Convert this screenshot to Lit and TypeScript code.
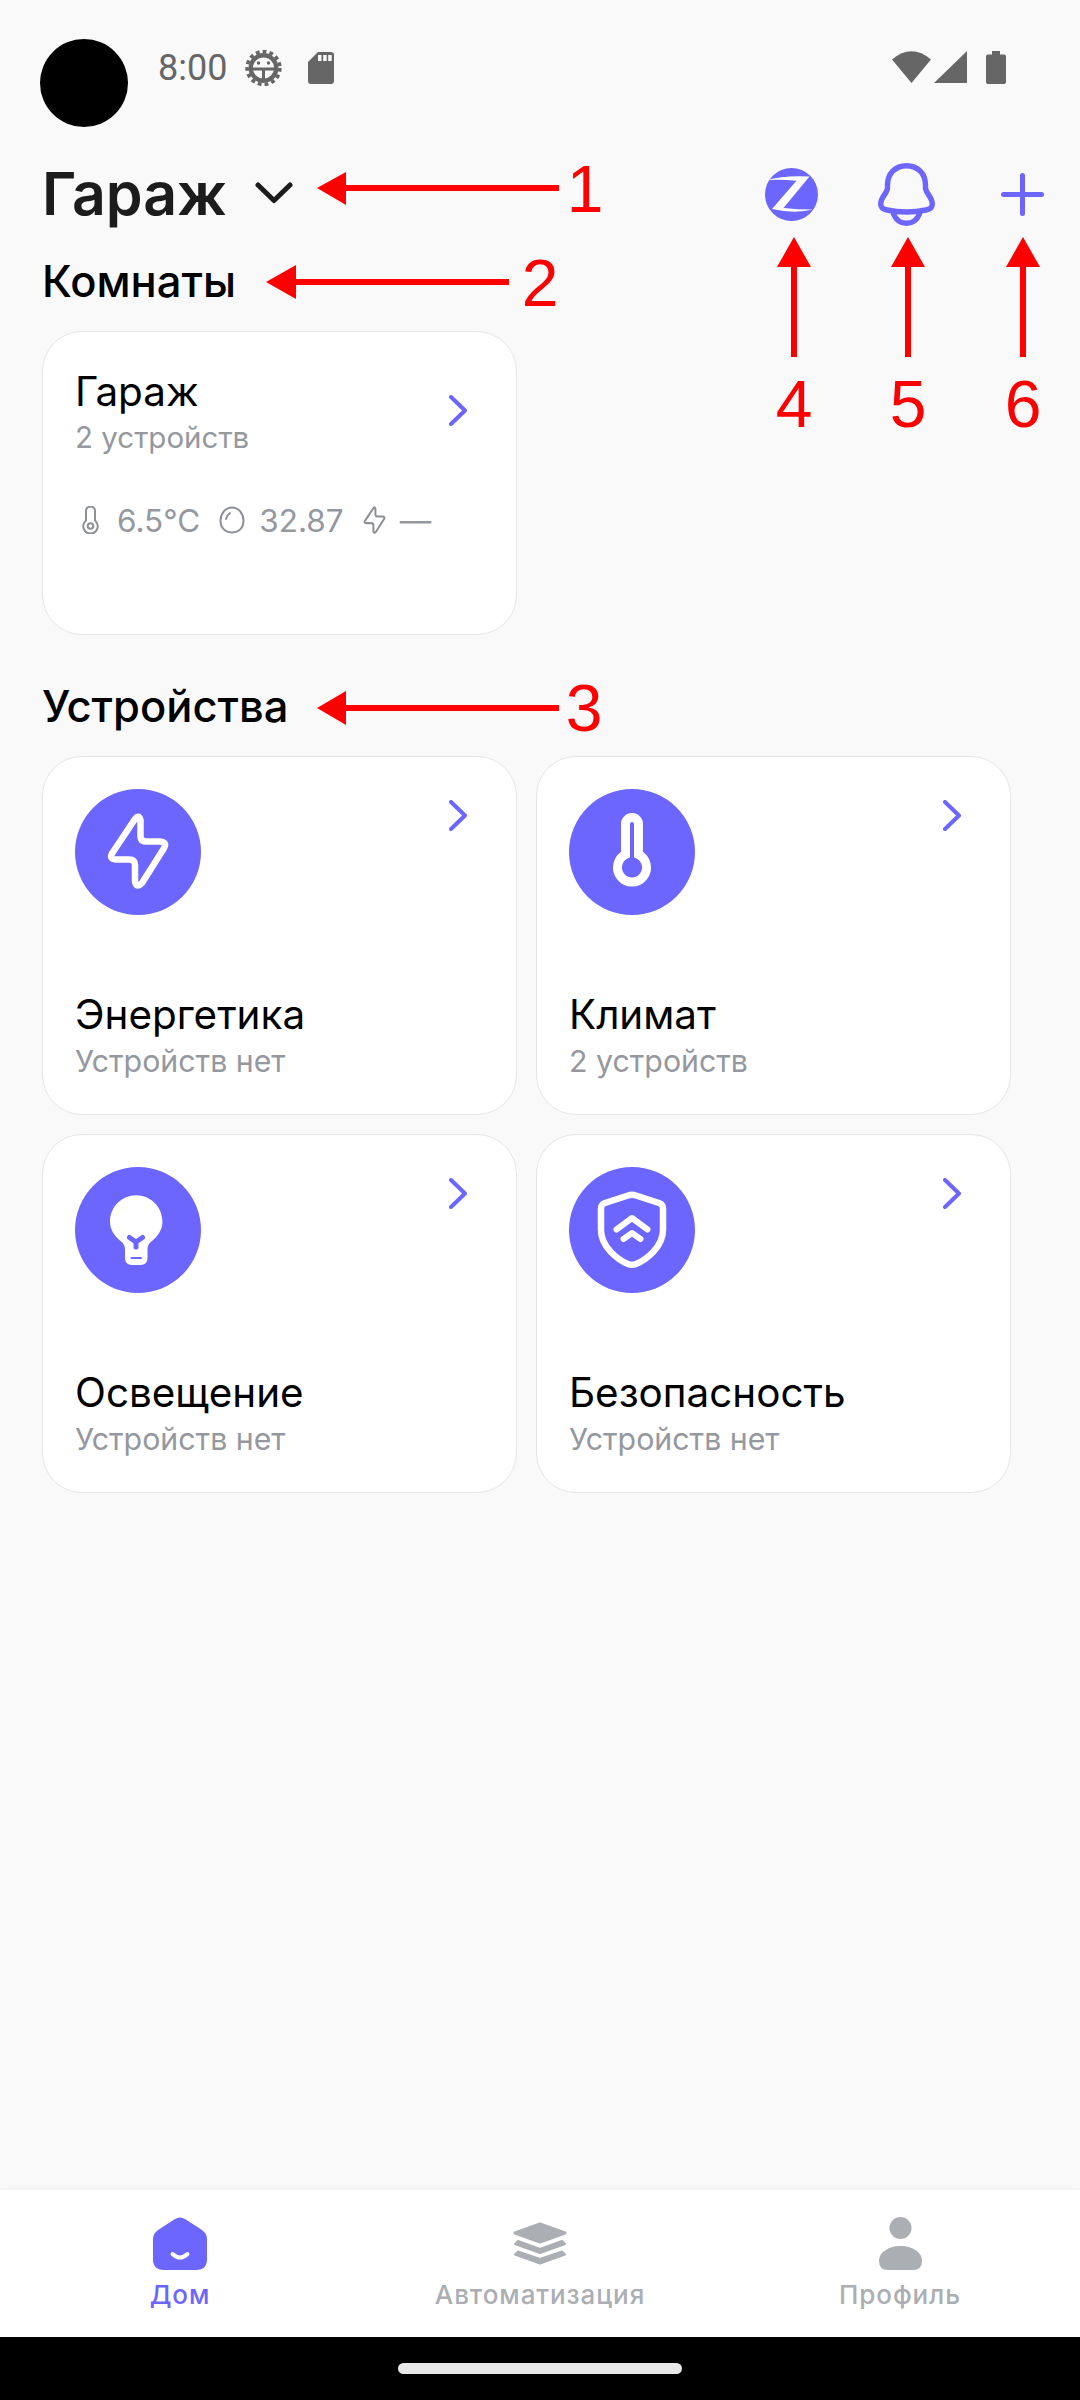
import { LitElement, html, css } from "lit";
import { customElement } from "lit/decorators.js";

const BOLT =
  "M60 30 Q64 25 65.5 31 L65.5 47 Q65.5 52.5 71 52.5 L85 52.5 Q93 53 88.5 60 L67 94 Q61 100 60 92 L60 76 Q60 70.5 54 70.5 L41 70.5 Q33 70 38 63 Z";

const chevron = html`<svg class="chevron" width="18" height="31" viewBox="0 0 18 31">
  <path d="M2 2 L16 15.5 L2 29" fill="none" stroke="#6c66ff" stroke-width="4" stroke-linecap="round" stroke-linejoin="round" />
</svg>`;

const icons: Record<string, unknown> = {
  energy: html`<svg width="126" height="126" viewBox="0 0 126 126">
    <circle cx="63" cy="63" r="63" fill="#6c66ff" />
    <path d=${BOLT} fill="none" stroke="#fff" stroke-width="6.5" stroke-linejoin="round" />
  </svg>`,
  climate: html`<svg width="126" height="126" viewBox="0 0 126 126">
    <circle cx="63" cy="63" r="63" fill="#6c66ff" />
    <path d="M56.5 65.5 V35 a6.5 6.5 0 0 1 13 0 V65.5 A14.5 14.5 0 1 1 56.5 65.5 Z" fill="none" stroke="#fff" stroke-width="9" />
  </svg>`,
  light: html`<svg width="126" height="126" viewBox="0 0 126 126">
    <circle cx="63" cy="63" r="63" fill="#6c66ff" />
    <path d="M61.2 28.3 C75.7 28.3 87.4 40 87.4 54.5 C87.4 63 83 69 77 74 C73.5 77 72.5 79 72.5 83 V91 Q72.5 98 65.5 98 H57 Q50 98 50 91 V83 C50 79 49 77 45.5 74 C39.5 69 35 63 35 54.5 C35 40 46.7 28.3 61.2 28.3 Z" fill="#fff" />
    <path d="M54.5 70.5 L61 75 L67.5 70.5 M61 75 V80" fill="none" stroke="#6c66ff" stroke-width="5" stroke-linecap="round" stroke-linejoin="round" />
    <path d="M56.5 91 H66" fill="none" stroke="#6c66ff" stroke-width="2" stroke-linecap="round" />
  </svg>`,
  security: html`<svg width="126" height="126" viewBox="0 0 126 126">
    <circle cx="63" cy="63" r="63" fill="#6c66ff" />
    <path d="M59 28.5 Q63 27 67 28.5 L90 36 Q94 37.5 94 41 V63 C94 80 77 93 67 97 Q63 98.5 59 97 C49 93 32 80 32 63 V41 Q32 37.5 36 36 Z" fill="none" stroke="#fff" stroke-width="6.5" stroke-linejoin="round" />
    <path d="M47.5 62.5 L63 51 L78.5 62.5 M54.5 72 L63 66 L71.5 72" fill="none" stroke="#fff" stroke-width="6" stroke-linecap="round" stroke-linejoin="round" />
  </svg>`,
};

const devices = [
  { icon: "energy", title: "Энергетика", sub: "Устройств нет" },
  { icon: "climate", title: "Климат", sub: "2 устройств" },
  { icon: "light", title: "Освещение", sub: "Устройств нет" },
  { icon: "security", title: "Безопасность", sub: "Устройств нет" },
];

@customElement("app-root")
export class AppRoot extends LitElement {
  static styles = css`
    :host {
      display: flex;
      flex-direction: column;
      position: relative;
      width: 1080px;
      height: 2400px;
      overflow: hidden;
      background: #f9f9f9;
      font-family: Inter, "Noto Sans", sans-serif;
      color: #000;
    }

    svg {
      display: block;
      flex: none;
    }

    /* Status bar */
    .status {
      display: flex;
      justify-content: space-between;
      padding: 39px 74px 0 40px;
    }
    .camera {
      width: 88px;
      height: 88px;
      border-radius: 50%;
      background: #000;
    }
    .status-left {
      display: flex;
      align-items: center;
      flex: 1;
      height: 36px;
      margin: 11px 0 0 30px;
      font: 36px Roboto, sans-serif;
      color: #666;
    }
    .time {
      margin-right: 18px;
    }
    .gear {
      margin-right: 26px;
    }
    .status-right {
      display: flex;
      align-items: flex-start;
      margin-top: 12px;
    }

    /* Header */
    .main {
      flex: 1;
      padding: 32px 0 0 42px;
    }
    .header {
      display: flex;
      align-items: center;
      height: 70px;
      padding-right: 36px;
    }
    .home-title {
      font-size: 59px;
      line-height: 70px;
      font-weight: 600;
      color: #1c1c1c;
    }
    .caret {
      margin: -2px 0 0 28px;
    }
    .actions {
      display: flex;
      align-items: center;
      margin-left: auto;
    }

    /* Sections */
    .section-title {
      margin: 28px 0 26px;
      font-size: 43.5px;
      line-height: 48px;
      font-weight: 500;
    }
    .section-title.devices {
      margin: 47px 0 26px;
    }
    .grid {
      display: grid;
      grid-template-columns: 475px 475px;
      gap: 19px;
    }
    .card {
      box-sizing: border-box;
      width: 475px;
      background: #fff;
      border: 1px solid #e6e6e8;
      border-radius: 40px;
    }
    .room {
      height: 304px;
      padding: 37px 49px 0 32px;
    }
    .room-head {
      display: flex;
      justify-content: space-between;
    }
    .room-head .chevron {
      margin-top: 26px;
    }
    .room-head .sub {
      margin-top: 4px;
      font-size: 29.5px;
    }
    .device {
      display: flex;
      flex-direction: column;
      justify-content: space-between;
      height: 359px;
      padding: 32px 49px 35px 32px;
    }
    .device-head {
      display: flex;
      justify-content: space-between;
    }
    .device-head .chevron {
      margin-top: 11px;
    }
    .name {
      font-size: 40.4px;
      line-height: 46px;
    }
    .sub {
      margin-top: 5px;
      font-size: 30.3px;
      line-height: 36px;
      color: #95989e;
    }
    .stats {
      display: flex;
      align-items: center;
      height: 36px;
      margin-top: 47px;
      font-size: 31.5px;
      color: #95989e;
    }
    .stat-temp {
      margin: 0 18px 0 7px;
    }
    .stat-icon {
      margin: 0 14px 0 19px;
    }

    /* Bottom nav */
    .nav {
      display: grid;
      grid-template-columns: repeat(3, 1fr);
      height: 147px;
      padding-top: 27px;
      box-sizing: border-box;
      background: #fff;
      box-shadow: 0 -1px 5px rgba(0, 0, 0, 0.04);
    }
    .tab {
      display: flex;
      flex-direction: column;
      align-items: center;
      font-size: 26px;
      line-height: 30px;
      font-weight: 500;
      letter-spacing: 0.9px;
      color: #abaeb2;
    }
    .tab.active {
      color: #6c66ff;
    }
    .tab-icon {
      display: flex;
      align-items: center;
      height: 53px;
      margin-bottom: 10px;
    }
    .gesture {
      display: flex;
      justify-content: center;
      height: 63px;
      padding-top: 26px;
      box-sizing: border-box;
      background: #000;
    }
    .gesture div {
      width: 284px;
      height: 11px;
      border-radius: 6px;
      background: #e8e8e8;
    }

    /* Red annotations drawn on top of the screenshot */
    .notes {
      position: absolute;
      left: 0;
      top: 0;
      pointer-events: none;
    }
    .notes text {
      font: 66px "Liberation Sans", Arial, sans-serif;
      fill: #ff0000;
      text-anchor: middle;
    }
  `;

  renderStatus() {
    return html`<div class="status">
      <div class="camera"></div>
      <div class="status-left">
        <span class="time">8:00</span>
        <svg class="gear" width="37" height="36" viewBox="0 0 37 36" fill="none" stroke="#666">
          <circle cx="18.5" cy="18" r="16.4" stroke-width="3.6" stroke-dasharray="3.8 3.1" />
          <circle cx="18.5" cy="18" r="12.8" stroke-width="4.4" />
          <path d="M5.5 19 H31.5 M18.5 19 V31" stroke-width="3" />
          <circle cx="13.5" cy="13" r="1.7" fill="#666" stroke="none" />
          <circle cx="23.5" cy="13" r="1.7" fill="#666" stroke="none" />
        </svg>
        <svg width="26" height="32" viewBox="0 0 26 32">
          <path d="M10 0 H23 a3 3 0 0 1 3 3 V29 a3 3 0 0 1 -3 3 H3 a3 3 0 0 1 -3 -3 V10 Z" fill="#666" />
          <path d="M10 3 h3.5 v6 h-3.5 Z M15.2 3 h3.5 v6 h-3.5 Z M20.2 3 h3.5 v6 h-3.5 Z" fill="#f9f9f9" />
        </svg>
      </div>
      <div class="status-right">
        <svg width="114" height="33" viewBox="0 0 114 33" fill="#666">
          <path d="M0 8.5 Q19.5 -8 39 8.5 L19.5 32 Z" />
          <path d="M75 0 V32 H42 Z" />
          <path d="M100 0 h8 v3.5 h4 a2 2 0 0 1 2 2 V31 a2 2 0 0 1 -2 2 H96 a2 2 0 0 1 -2 -2 V5.5 a2 2 0 0 1 2 -2 h4 Z" />
        </svg>
      </div>
    </div>`;
  }

  renderHeader() {
    return html`<div class="header">
      <span class="home-title">Гараж</span>
      <svg class="caret" width="38" height="22" viewBox="0 0 38 22">
        <path d="M3 3 L19 18.5 L35 3" fill="none" stroke="#1c1c1c" stroke-width="5" stroke-linecap="round" stroke-linejoin="round" />
      </svg>
      <div class="actions">
        <svg width="53" height="53" viewBox="0 0 53 53">
          <circle cx="26.5" cy="26.5" r="26.5" fill="#6c66ff" />
          <path d="M1.5 12 Q20 7 44.5 8.5 L18.5 40 Q33 41.5 48 41.5 Q30 46 7 41 L31.5 12.8 Q18 11 1.5 12 Z" fill="#fff" />
        </svg>
        <svg style="margin-left:60px" width="57" height="63" viewBox="0 0 57 63" fill="none" stroke="#6c66ff" stroke-width="5.4" stroke-linecap="round">
          <path d="M28.5 2.7 C17 2.7 9.5 11 9.5 22 V25 C9.5 30 2.7 34 2.7 41 C2.7 45 6 46.5 9 47 C15 48.3 22 49 28.5 49 C35 49 42 48.3 48 47 C51 46.5 54.3 45 54.3 41 C54.3 34 47.5 30 47.5 25 V22 C47.5 11 40 2.7 28.5 2.7 Z" />
          <path d="M15.5 51 C18 57 23 60.3 28.5 60.3 C34 60.3 39 57 41.5 51" />
        </svg>
        <svg style="margin-left:66px" width="43" height="43" viewBox="0 0 43 43" fill="none" stroke="#6c66ff" stroke-width="5" stroke-linecap="round">
          <path d="M21.5 2.5 V40.5 M2.5 21.5 H40.5" />
        </svg>
      </div>
    </div>`;
  }

  renderRoom() {
    return html`<div class="card room">
      <div class="room-head">
        <div>
          <div class="name">Гараж</div>
          <div class="sub">2 устройств</div>
        </div>
        ${chevron}
      </div>
      <div class="stats">
        <svg class="stat-temp" width="17" height="28" viewBox="0 0 17 28" fill="none" stroke="#8d9096" stroke-width="2">
          <path d="M4 14.5 V5 a4.5 4.5 0 0 1 9 0 V14.5 a7.3 7.3 0 1 1 -9 0 Z" />
          <circle cx="8.5" cy="20" r="2.8" />
        </svg>
        <span>6.5°C</span>
        <svg class="stat-icon" width="26" height="28" viewBox="0 0 26 28" fill="none" stroke="#8d9096" stroke-width="2" stroke-linecap="round">
          <path d="M13 1.5 C20 1.5 24.5 8 24.5 15 C24.5 22 19.5 26.5 13 26.5 C6.5 26.5 1.5 22 1.5 15 C1.5 8 6 1.5 13 1.5 Z" />
          <path d="M7 13 Q8 9 11 7" />
        </svg>
        <span>32.87</span>
        <svg class="stat-icon" width="23" height="28" viewBox="32 24 62 76">
          <path d=${BOLT} fill="none" stroke="#8d9096" stroke-width="5.5" stroke-linejoin="round" />
        </svg>
        <span>—</span>
      </div>
    </div>`;
  }

  renderNav() {
    return html`<div class="nav">
      <div class="tab active">
        <div class="tab-icon">
          <svg width="54" height="53" viewBox="0 0 54 53">
            <path d="M22 2 Q27 -1 32 2 L49 13 Q54 16.5 54 22 V42 Q54 53 43 53 H11 Q0 53 0 42 V22 Q0 16.5 5 13 Z" fill="#6c66ff" />
            <path d="M19.5 37 Q27 44 34.5 37" fill="none" stroke="#fff" stroke-width="4" stroke-linecap="round" />
          </svg>
        </div>
        Дом
      </div>
      <div class="tab">
        <div class="tab-icon">
          <svg width="54" height="43" viewBox="0 0 54 43" fill="#abaeb2" stroke="#abaeb2" stroke-width="3" stroke-linejoin="round">
            <path d="M27 2 L52 11 L27 20 L2 11 Z" />
            <path d="M5 19 L27 27 L49 19 L52 22 L27 31 L2 22 Z" stroke-width="2" />
            <path d="M5 29.5 L27 37 L49 29.5 L52 32.5 L27 41.5 L2 32.5 Z" stroke-width="2" />
          </svg>
        </div>
        Автоматизация
      </div>
      <div class="tab">
        <div class="tab-icon">
          <svg width="43" height="53" viewBox="0 0 43 53" fill="#abaeb2">
            <circle cx="21.5" cy="11" r="11" />
            <path d="M0 44 C0 35 10 29 21.5 29 C33 29 43 35 43 44 Q43 53 34 53 H9 Q0 53 0 44 Z" />
          </svg>
        </div>
        Профиль
      </div>
    </div>`;
  }

  renderNotes() {
    return html`<svg class="notes" width="1080" height="2400" viewBox="0 0 1080 2400">
      <g fill="#ff0000" stroke="none">
        <path d="M317 188 L346 172 V185 H559 V191 H346 V205 Z" />
        <path d="M266 282 L296 265 V279 H509 V285 H296 V299 Z" />
        <path d="M317 708 L346 691 V705 H559 V711 H346 V725 Z" />
        <path d="M794 237 L811 267 H797 V357 H791 V267 H777 Z" />
        <path d="M908 237 L925 267 H911 V357 H905 V267 H891 Z" />
        <path d="M1023 237 L1040 267 H1026 V357 H1020 V267 H1006 Z" />
      </g>
      <text x="585" y="212">1</text>
      <text x="540" y="306">2</text>
      <text x="584" y="731">3</text>
      <text x="794" y="427">4</text>
      <text x="908" y="427">5</text>
      <text x="1023" y="427">6</text>
    </svg>`;
  }

  render() {
    return html`
      ${this.renderStatus()}
      <div class="main">
        ${this.renderHeader()}
        <div class="section-title">Комнаты</div>
        ${this.renderRoom()}
        <div class="section-title devices">Устройства</div>
        <div class="grid">
          ${devices.map(
            (d) => html`<div class="card device">
              <div class="device-head">${icons[d.icon]} ${chevron}</div>
              <div>
                <div class="name">${d.title}</div>
                <div class="sub">${d.sub}</div>
              </div>
            </div>`
          )}
        </div>
      </div>
      ${this.renderNav()}
      <div class="gesture"><div></div></div>
      ${this.renderNotes()}
    `;
  }
}
